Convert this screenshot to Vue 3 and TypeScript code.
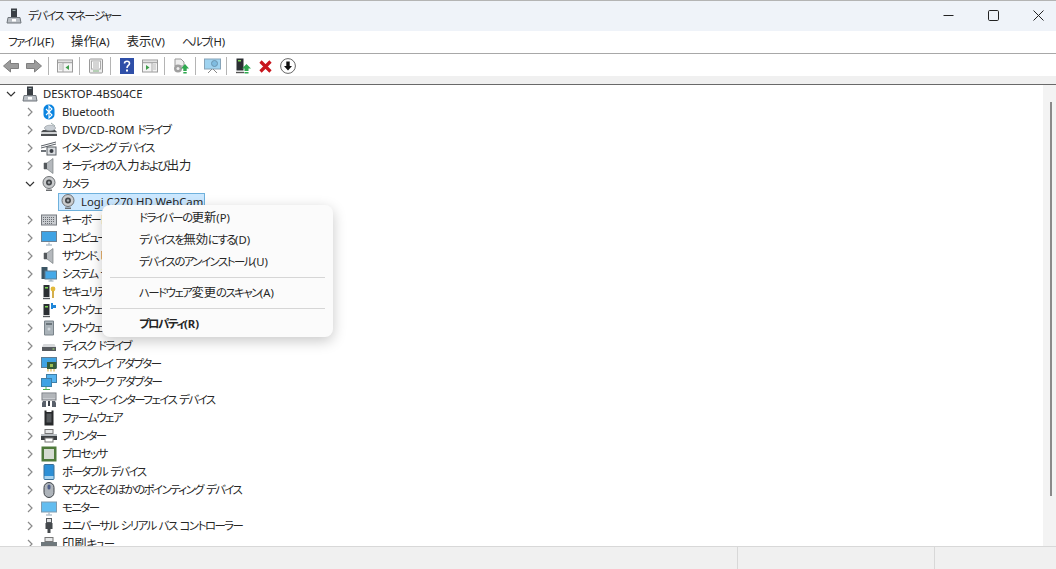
<script setup lang="ts">
interface Row { label: string; icon: string; open?: boolean; level?: number; selected?: boolean }
interface Run { text: string; cls: string }

const monitorStand = '<path d="M8 12.5v2M5 15h6" stroke="#8fa3b3" fill="none"/>'

const icons: Record<string, string> = {
  host: '<rect x="5" y="0.500" width="6" height="8.500" fill="#3a3f45"/><rect x="6.500" y="2" width="3" height="1" fill="#9aa"/><path d="M2 9.500h12l1 5.500H1z" fill="#b9bec4" stroke="#70767c"/><rect x="6" y="11" width="4" height="2.500" fill="#fff"/>',
  bt: '<rect x="2.500" y="0.500" width="11" height="15" rx="5" fill="#0a84e0"/><path d="M5 5l6 6-3 3V2l3 3-6 6" stroke="#fff" fill="none" stroke-width="1.100"/>',
  dvd: '<path d="M0 10l2-2h12l2 2v4H0z" fill="#4c4f52"/><rect x="0" y="10" width="16" height="2" fill="#d0d2d4"/><ellipse cx="9" cy="6" rx="5.500" ry="2.800" fill="#c8ced4" stroke="#8a9097" stroke-width=".6"/><path d="M10 1l4 3" stroke="#9aa" />',
  image: '<path d="M0 6l15-4M0 8l15-4" stroke="#5b6066"/><path d="M0 10h5v2H0z" fill="#6d7278"/><rect x="6" y="7" width="9" height="8" fill="#d9dcdf" stroke="#5b6066"/><circle cx="10.500" cy="11" r="2" fill="#3a3f45"/>',
  speaker: '<path d="M3 5h3l6-4.500v15L6 11H3z" fill="#b4b8bc" stroke="#797e83" stroke-width=".7"/><rect x="3" y="5" width="3" height="6" fill="#54585c"/>',
  cam: '<circle cx="8" cy="6.500" r="6" fill="#c9cbcd" stroke="#6e7174"/><circle cx="8" cy="6.500" r="3" fill="#45484b"/><circle cx="8" cy="6.500" r="1.200" fill="#a8acb0"/><path d="M5 13.500h6v1.500H5z" fill="#6a6d70"/>',
  kbd: '<rect x="0.500" y="3" width="15" height="10" fill="#c9ccd0" stroke="#777b80"/><path d="M2 5.500h12M2 7.500h12M2 9.500h12M4 11.500h8" stroke="#6a6e73" stroke-dasharray="1 1"/>',
  computer: '<rect x="0.500" y="1.500" width="15" height="10" fill="#3fa3e4" stroke="#6c8295"/>' + monitorStand,
  system: '<rect x="0.500" y="1" width="6" height="12" fill="#3b5564"/><rect x="4" y="5" width="11.500" height="8" fill="#45a9e8" stroke="#5d7f95"/><path d="M10 13v2M7.500 15h5" stroke="#8fa3b3"/>',
  security: '<rect x="2.500" y="1" width="6" height="12" fill="#2b2f33"/><rect x="4" y="3" width="3" height="1.500" fill="#7ed957"/><path d="M2 14.500h7" stroke="#55595d" stroke-width="1.400"/><circle cx="12" cy="5" r="2.400" fill="#e2b93b"/><path d="M12 7v7" stroke="#c99b22" stroke-width="1.600"/>',
  softDev: '<rect x="2.500" y="2" width="6" height="11" fill="#2b2f33"/><rect x="4" y="4" width="3" height="1.500" fill="#7ed957"/><path d="M2 14.500h7" stroke="#55595d" stroke-width="1.400"/><path d="M10 1h2v2h3v3h-3v1h-2z" fill="#1f86d9"/>',
  softComp: '<path d="M3.500 1h9v14h-9z" fill="#a9b2b8" stroke="#79838a"/><rect x="5" y="3" width="6" height="2" fill="#6b757b"/><circle cx="8" cy="9" r="1.500" fill="#d4dade"/>',
  disk: '<path d="M1 9l1.500-3h11L15 9v4H1z" fill="#d7d9db"/><rect x="1" y="9" width="14" height="4" fill="#565a5e"/><rect x="11.500" y="10.500" width="2" height="1" fill="#9fe27a"/>',
  display: '<rect x="0.500" y="1.500" width="15" height="10" fill="#3fa3e4" stroke="#5f7d93"/><rect x="6" y="6" width="9.500" height="7" fill="#355d3b"/><path d="M7 13v2.500M10 13v2.500M13 13v2.500" stroke="#d1a52c"/><rect x="9" y="8" width="3" height="3" fill="#9bbf55"/>',
  net: '<rect x="5.500" y="0.500" width="10" height="8" fill="#58b4ee" stroke="#3f7fa8"/><rect x="0.500" y="4.500" width="10" height="8" fill="#3fa3e4" stroke="#3f7fa8"/><path d="M5 12.500V15M2 15.500h7" stroke="#4cb050"/>',
  hid: '<rect x="1" y="1" width="14" height="7" fill="#c9ccd0" stroke="#777b80"/><path d="M2.500 3h11M2.500 5h11" stroke="#70747a" stroke-dasharray="1 1"/><path d="M2 9h3v6H1v-4zM11 9h3l1 2v4h-4z" fill="#59606a"/><path d="M7 9h2v5H7z" fill="#3e444c"/>',
  firm: '<path d="M3.500 0.500h2V2h5V0.500h2v15h-9z" fill="#27292b"/><rect x="5.500" y="3.500" width="5" height="9" fill="#55595c"/>',
  printer: '<rect x="4" y="1.500" width="8" height="4" fill="#e5e7e8" stroke="#777"/><path d="M0 6h16v6H0z" fill="#3c4043"/><path d="M0 6h16v2H0z" fill="#b7bcc0"/><rect x="4" y="10" width="8" height="4" fill="#fff" stroke="#777"/>',
  cpu: '<rect x="0.500" y="0.500" width="15" height="15" fill="#4f7a3b"/><rect x="3" y="3" width="10" height="10" fill="#d6dcd2"/>',
  portable: '<rect x="3" y="0.500" width="10" height="15" rx="1" fill="#2c8fd6" stroke="#3a6f96"/><rect x="3.500" y="12" width="9" height="3" fill="#a8d4f0"/>',
  mouse: '<rect x="3" y="0.500" width="10" height="15" rx="5" fill="#aeb4ba" stroke="#3e4348"/><rect x="6.500" y="2.500" width="3" height="5" rx="1.500" fill="#4f5f8a"/>',
  monitor: '<rect x="0.500" y="2" width="15" height="10" fill="#62bdf0" stroke="#7f9bb0"/>' + monitorStand,
  usb: '<rect x="5.500" y="0.500" width="5" height="4" fill="#dfe1e3" stroke="#55595d"/><path d="M4.500 5h7v6h-2v4h-3v-4h-2z" fill="#44484c"/>',
  queue: '<rect x="4" y="1.500" width="8" height="4" fill="#e5e7e8" stroke="#777"/><path d="M0 6h16v6H0z" fill="#6f787c"/><rect x="4" y="10" width="8" height="4" fill="#fff" stroke="#777"/>'
}

const rows: Row[] = [
  { label: 'DESKTOP-4BS04CE', icon: 'host', open: true, level: 0 },
  { label: 'Bluetooth', icon: 'bt' },
  { label: 'DVD/CD-ROM ドライブ', icon: 'dvd' },
  { label: 'イメージング デバイス', icon: 'image' },
  { label: 'オーディオの入力および出力', icon: 'speaker' },
  { label: 'カメラ', icon: 'cam', open: true },
  { label: 'Logi C270 HD WebCam', icon: 'cam', level: 2, selected: true },
  { label: 'キーボード', icon: 'kbd' },
  { label: 'コンピューター', icon: 'computer' },
  { label: 'サウンド、ビデオ、およびゲーム コントローラー', icon: 'speaker' },
  { label: 'システム デバイス', icon: 'system' },
  { label: 'セキュリティ デバイス', icon: 'security' },
  { label: 'ソフトウェア デバイス', icon: 'softDev' },
  { label: 'ソフトウェア コンポーネント', icon: 'softComp' },
  { label: 'ディスク ドライブ', icon: 'disk' },
  { label: 'ディスプレイ アダプター', icon: 'display' },
  { label: 'ネットワーク アダプター', icon: 'net' },
  { label: 'ヒューマン インターフェイス デバイス', icon: 'hid' },
  { label: 'ファームウェア', icon: 'firm' },
  { label: 'プリンター', icon: 'printer' },
  { label: 'プロセッサ', icon: 'cpu' },
  { label: 'ポータブル デバイス', icon: 'portable' },
  { label: 'マウスとそのほかのポインティング デバイス', icon: 'mouse' },
  { label: 'モニター', icon: 'monitor' },
  { label: 'ユニバーサル シリアル バス コントローラー', icon: 'usb' },
  { label: '印刷キュー', icon: 'queue' }
]

const menus = ['ファイル(F)', '操作(A)', '表示(V)', 'ヘルプ(H)']

const menuItems = [
  { text: 'ドライバーの更新(P)' },
  { text: 'デバイスを無効にする(D)' },
  { text: 'デバイスのアンインストール(U)' },
  { sep: true },
  { text: 'ハードウェア変更のスキャン(A)' },
  { sep: true },
  { text: 'プロパティ(R)', bold: true }
]

// The reference's UI font has narrow Latin and kana: size each script on its own.
function runs(s: string): Run[] {
  const parts = s.match(/[\x20-\x7e]+|[\u4e00-\u9fff]+|[^\x20-\x7e\u4e00-\u9fff]+/g) ?? []
  return parts.map((text) => ({
    text,
    cls: /^[\x20-\x7e]/.test(text) ? 'latin' : /^[\u4e00-\u9fff]/.test(text) ? 'kanji' : 'kana'
  }))
}
</script>

<template>
  <div class="window">
    <header class="titlebar">
      <svg class="title-icon" viewBox="0 0 16 16" v-html="icons.host"></svg>
      <span class="title-text"><span v-for="(p, i) in runs('デバイス マネージャー')" :key="i" :class="p.cls">{{ p.text }}</span></span>
      <div class="caption">
        <svg viewBox="0 0 11 11" class="cap"><path d="M0.500 5.500h10" stroke="#222" /></svg>
        <svg viewBox="0 0 11 11" class="cap"><rect x=".5" y=".5" width="10" height="10" rx="1.200" fill="none" stroke="#222" /></svg>
        <svg viewBox="0 0 11 11" class="cap"><path d="M0.500 0.500l10 10M10.500 0.500l-10 10" stroke="#222" fill="none" /></svg>
      </div>
    </header>

    <nav class="menubar">
      <span v-for="m in menus" :key="m" class="menu"><span v-for="(p, i) in runs(m)" :key="i" :class="p.cls">{{ p.text }}</span></span>
    </nav>

    <div class="toolbar">
      <svg class="tool arrow" viewBox="0 0 16 14"><path d="M0.500 7l7-6v3.500h8v5h-8V13z" fill="#9c9c9c" stroke="#7f7f7f"/></svg>
      <svg class="tool arrow second" viewBox="0 0 16 14"><path d="M15.500 7l-7-6v3.500h-8v5h8V13z" fill="#9c9c9c" stroke="#7f7f7f"/></svg>
      <i class="tsep"></i>
      <svg class="tool" viewBox="0 0 16 16"><rect x=".5" y="2" width="15" height="12" fill="#f4f4f4" stroke="#9a9a9a"/><path d="M1 4.500h14" stroke="#aaa" stroke-width="1.500"/><path d="M6 5v9" stroke="#aaa"/><path d="M2 7h3M2 9h3M2 11h3" stroke="#bbb"/><path d="M12 7l-3.500 2.500L12 12z" fill="#3e9d4a"/></svg>
      <i class="tsep"></i>
      <svg class="tool" viewBox="0 0 16 16"><rect x="1.500" y="1" width="13" height="14" rx="1" fill="#eee" stroke="#999"/><rect x="3.500" y="3" width="9" height="8" fill="#fff" stroke="#aaa"/><path d="M5 5h6M5 7h6M5 9h6" stroke="#aaa"/><path d="M5 13h6" stroke="#7ab07a"/></svg>
      <i class="tsep"></i>
      <svg class="tool" viewBox="0 0 16 16"><rect width="14" height="16" x="1" fill="#2f4fa8"/><path d="M5.500 5.500C5.500 2.500 10.500 2.500 10.500 5.500 10.500 7.500 8 7.500 8 10" stroke="#fff" stroke-width="1.600" fill="none"/><rect x="7" y="11.500" width="2" height="2" fill="#fff"/></svg>
      <svg class="tool help2" viewBox="0 0 16 16"><rect x=".5" y="2" width="15" height="12" fill="#f4f4f4" stroke="#9a9a9a"/><path d="M1 4.500h14" stroke="#aaa" stroke-width="1.500"/><path d="M10 5v9" stroke="#aaa"/><path d="M11 7h3M11 9h3M11 11h3" stroke="#bbb"/><path d="M4 7l3.500 2.500L4 12z" fill="#3e9d4a"/></svg>
      <i class="tsep"></i>
      <svg class="tool" viewBox="0 0 16 16"><path d="M2 1h6l3 3v4H2z" fill="#eee" stroke="#999"/><circle cx="5" cy="10.500" r="4" fill="#a0a0a0"/><circle cx="5" cy="10.500" r="1.500" fill="#eee"/><path d="M12 6l4 4.500h-2.300V13h-3.400v-2.500H8z" fill="#2fa84f"/><rect x="10.300" y="14" width="3.400" height="1.500" fill="#2fa84f"/></svg>
      <i class="tsep"></i>
      <svg class="tool wide" viewBox="0 0 17 16"><rect x=".5" y="1" width="16" height="10" fill="#9fd3f0" stroke="#87a4b8"/><path d="M8 11l-4 4M9 11l4 4" stroke="#888"/><circle cx="10.500" cy="5.500" r="3" fill="#7fbce0" stroke="#6a95b0"/></svg>
      <i class="tsep narrow"></i>
      <svg class="tool" viewBox="0 0 16 16"><rect x="1.500" y="0.500" width="7" height="12" fill="#2b2f33"/><rect x="3" y="2" width="3" height="1.500" fill="#7ed957"/><path d="M1 14.500h8" stroke="#555" stroke-width="1.400"/><path d="M11.500 6l4.500 4.500h-2.500V13h-4v-2.500H7z" fill="#2fa84f"/><rect x="9.500" y="14" width="4" height="1.500" fill="#2fa84f"/></svg>
      <svg class="tool del" viewBox="0 0 13 13"><path d="M1.500 1.500l10 10M11.500 1.500l-10 10" stroke="#c8161d" stroke-width="3.200"/></svg>
      <svg class="tool down" viewBox="0 0 16 16"><circle cx="8" cy="8" r="7.400" fill="#fff" stroke="#666"/><path d="M6.300 3.500h3.400V8H12l-4 4.500L4 8h2.300z" fill="#111"/></svg>
    </div>
    <div class="band"></div>

    <main class="tree-pane">
      <ul class="tree">
        <li v-for="r in rows" :key="r.label" class="row" :class="{ root: r.level === 0, child: r.level === 2 }">
          <svg v-if="r.level !== 2" class="chev" viewBox="0 0 10 10">
            <path v-if="r.open" d="M1 3l4 4 4-4" fill="none" stroke="#333" stroke-width="1.200"/>
            <path v-else d="M3 1l4 4-4 4" fill="none" stroke="#8a8a8a" stroke-width="1.200"/>
          </svg>
          <span class="item" :class="{ selected: r.selected }">
            <svg class="ic" viewBox="0 0 16 16" v-html="icons[r.icon]"></svg>
            <span class="label"><span v-for="(p, i) in runs(r.label)" :key="i" :class="p.cls">{{ p.text }}</span></span>
          </span>
        </li>
      </ul>
      <div class="scrollbar"><div class="thumb"></div></div>

      <div class="ctx">
        <template v-for="(m, i) in menuItems" :key="i">
          <div v-if="m.sep" class="cs"></div>
          <div v-else class="ci" :class="{ bold: m.bold }"><span v-for="(p, j) in runs(m.text ?? '')" :key="j" :class="p.cls">{{ p.text }}</span></div>
        </template>
      </div>
    </main>

    <footer class="status">
      <div class="s1"></div>
      <div class="s2"></div>
      <div class="s3"></div>
    </footer>
  </div>
</template>

<style>
html, body { margin: 0; padding: 0; overflow: hidden; background: #fff; }
</style>

<style scoped>
.window {
  width: 1056px;
  height: 569px;
  display: flex;
  flex-direction: column;
  overflow: hidden;
  font-family: "Noto Sans", "Noto Sans CJK JP", sans-serif;
  font-feature-settings: "palt";
  font-size: 12px;
  color: #262626;
  background: #fff;
}
.latin { font-size: 11.3px; }
.kanji { font-size: 12.3px; }
.kana { font-size: 11.4px; letter-spacing: -1.5px; }
.titlebar {
  height: 30px;
  flex: none;
  display: flex;
  align-items: center;
  padding-left: 6px;
  background: #eff3f9;
  border-top: 1px solid #b4b4b4;
}
.title-icon { width: 16px; height: 16px; }
.title-text { margin-left: 6px; margin-bottom: 2px; }
.caption {
  margin-left: auto;
  margin-bottom: 2px;
  padding-right: 12px;
  display: flex;
  gap: 34px;
}
.cap { width: 11px; height: 11px; display: block; }
.menubar {
  height: 22px;
  flex: none;
  display: flex;
  align-items: center;
  gap: 17px;
  padding-left: 8px;
  border-bottom: 1px solid #a8a8a8;
  background: #fff;
}
.menu { margin-bottom: 2px; }
.toolbar {
  height: 22px;
  flex: none;
  box-sizing: border-box;
  padding-top: 2px;
  display: flex;
  align-items: center;
  padding-left: 3px;
  background: #fff;
}
.tool { width: 16px; height: 16px; flex: none; }
.arrow { height: 14px; }
.second { margin-left: 7px; }
.help2 { margin-left: 7px; }
.wide { width: 17px; }
.del { width: 13px; height: 13px; margin-left: 8px; }
.down { margin-left: 8px; }
.tsep { width: 1px; height: 18px; background: #b4b4b4; margin: 0 8px 0 6px; flex: none; }
.tsep.narrow { margin-left: 5px; }
.band {
  height: 8px;
  flex: none;
  background: #f0f0f0;
  border-bottom: 1px solid #696969;
}
.tree-pane {
  position: relative;
  flex: 1;
  min-height: 0;
  overflow: hidden;
  background: #fff;
}
.tree { list-style: none; margin: 0; padding: 0; }
.row {
  height: 18px;
  display: flex;
  align-items: center;
  padding-left: 25px;
  white-space: nowrap;
}
.row.root { padding-left: 6px; }
.row.child { padding-left: 58px; }
.chev { width: 10px; height: 10px; flex: none; }
.item { display: flex; align-items: center; height: 18px; margin-left: 6px; padding-right: 2px; }
.row.child .item { margin-left: 0; }
.item.selected { background: #cce8ff; box-shadow: inset 0 0 0 1px #6fb1dc; padding-left: 2px; }
.ic { width: 16px; height: 16px; flex: none; }
.label { margin-left: 5px; margin-bottom: 2px; }
.scrollbar {
  position: absolute;
  right: 0;
  top: 0;
  bottom: 0;
  width: 13px;
  background: #f3f3f3;
}
.thumb { position: absolute; left: 7px; top: 17px; bottom: 50px; width: 2px; background: #8a8a8a; }
.ctx {
  position: absolute;
  left: 102px;
  top: 120px;
  width: 231px;
  height: 132px;
  box-sizing: border-box;
  padding: 2px 8px;
  background: #fbfbfb;
  border-radius: 8px;
  box-shadow: 0 4px 14px rgba(0, 0, 0, .22);
}
.ci { height: 22px; line-height: 21px; padding-left: 29px; }
.cs { height: 1px; background: #d6d6d6; margin: 4px 0; }
.bold { font-weight: 700; }
.status {
  height: 23px;
  flex: none;
  display: flex;
  box-sizing: border-box;
  background: #f0f0f0;
  border-top: 1px solid #d8d8d8;
}
.s1 { width: 737px; border-right: 1px solid #d8d8d8; }
.s2 { width: 196px; border-right: 1px solid #d8d8d8; }
.s3 { flex: 1; }
</style>
